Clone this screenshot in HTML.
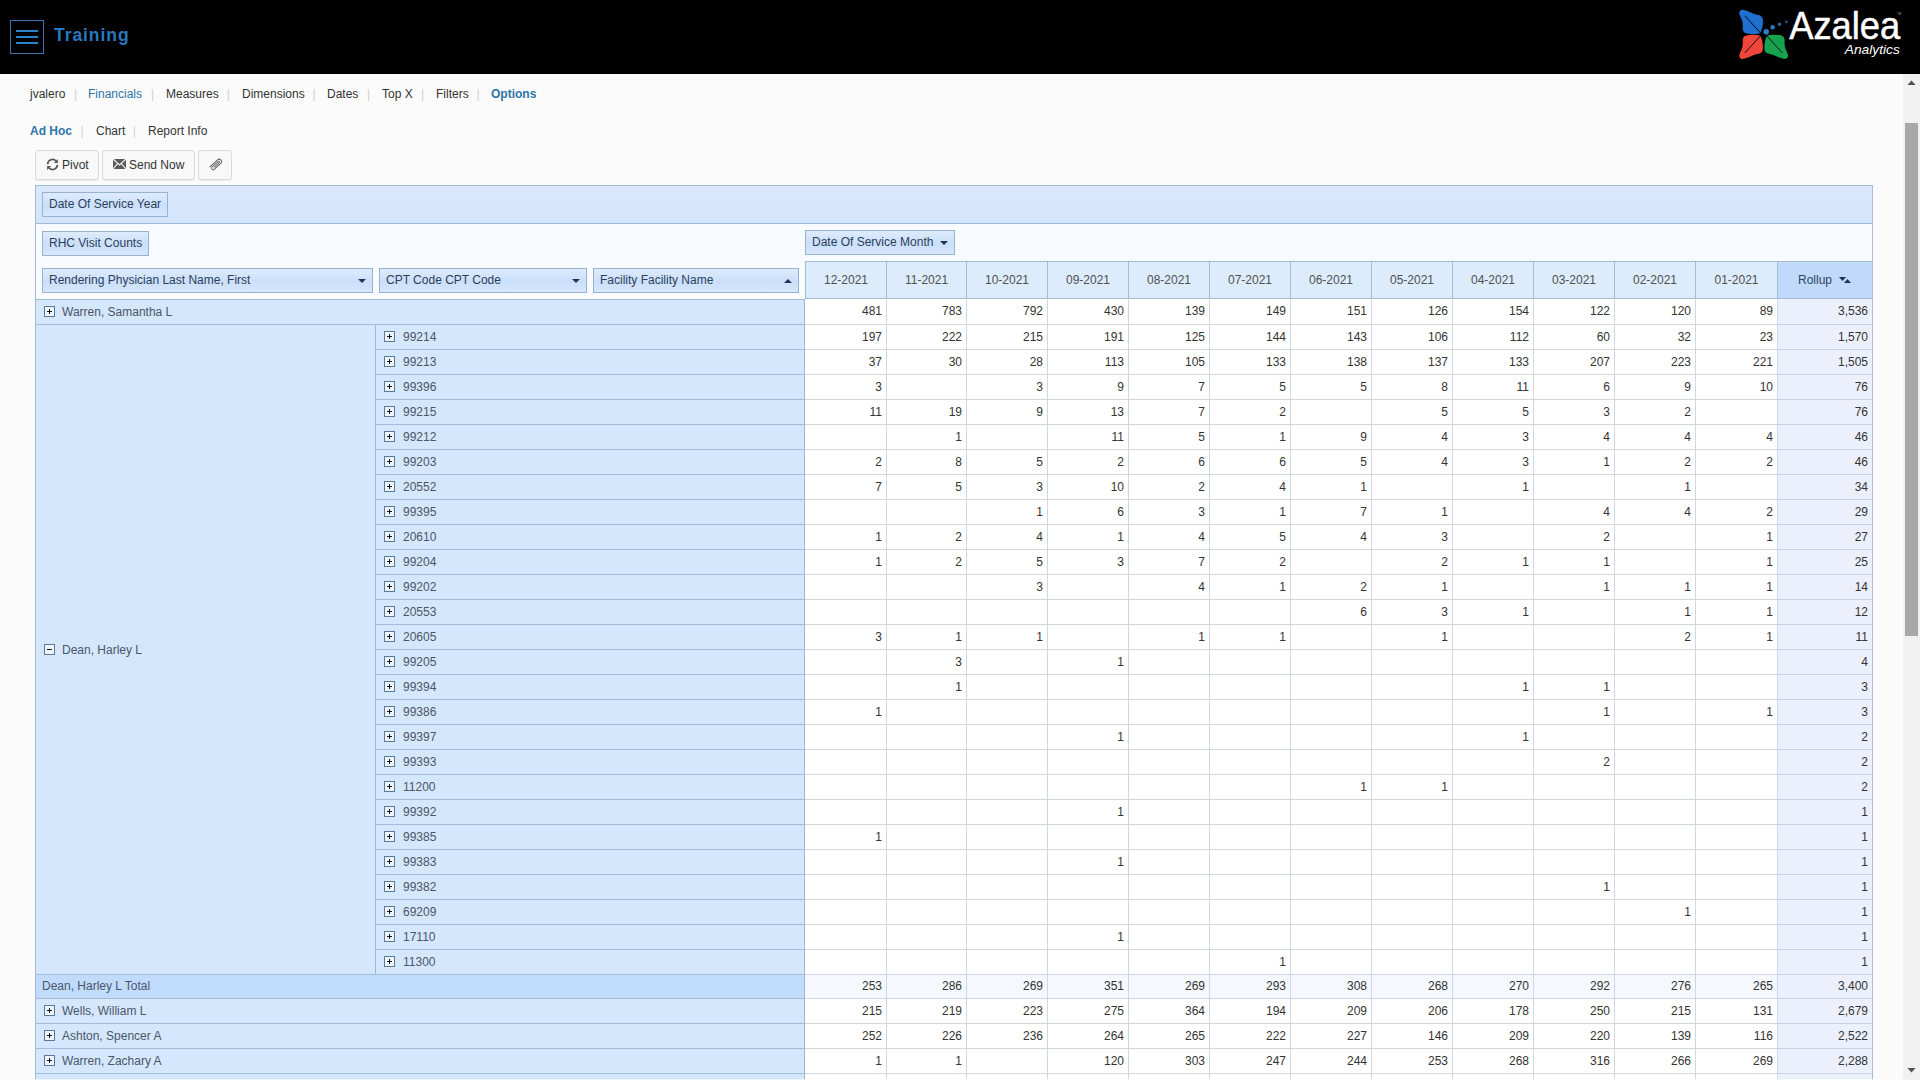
<!DOCTYPE html>
<html><head><meta charset="utf-8"><title>Training</title>
<style>
*{box-sizing:border-box;margin:0;padding:0}
html,body{width:1920px;height:1080px;overflow:hidden;background:#fbfbfb;font-family:"Liberation Sans",sans-serif;font-size:12px;color:#333}
#hdr{position:absolute;left:0;top:0;width:1920px;height:74px;background:#000}
#ham{position:absolute;left:10px;top:20px;width:34px;height:34px;border:1px solid #3a75ad}
#ham i{position:absolute;left:5px;width:22px;height:2px;background:#2a84c6}
#ttl{position:absolute;left:54px;top:23px;font-size:17.5px;font-weight:bold;color:#2878bf;line-height:24px;letter-spacing:.93px}
.nav{position:absolute;left:0;white-space:nowrap;font-size:12px;line-height:14px}
.nav span{position:absolute;top:0}
.nav .sep{color:#d0d0d0}
.lnk{color:#2f74a8}
.btn{position:absolute;top:150px;height:30px;border:1px solid #dcdcdc;border-radius:3px;background:#f8f8f8;box-shadow:0 1px 1px rgba(0,0,0,.07);font-size:12px;line-height:27px;color:#333;white-space:nowrap}
#grid{position:absolute;left:35px;top:185px;width:1838px;height:900px;background:#f7faff;border-left:1px solid #a3b9d6;border-right:1px solid #a8bdd8;border-top:1px solid #a3b9d6;overflow:hidden}
#farea{position:absolute;left:0;top:0;width:1836px;height:38px;background:linear-gradient(#d9e8fc,#d3e5fb);border-bottom:1px solid #9db9d9}
.chip{position:absolute;height:25px;border:1px solid #98b2d2;background:linear-gradient(#deebfd,#cbdffa 55%,#d7e7fc);font-size:12px;line-height:23px;color:#2b3f5c;padding-left:6px;white-space:nowrap}
.chip .ar{position:absolute;right:6px;top:10px;width:0;height:0;border-left:4px solid transparent;border-right:4px solid transparent;border-top:4px solid #1f3554}
.chip .au{position:absolute;right:6px;top:10px;width:0;height:0;border-left:4px solid transparent;border-right:4px solid transparent;border-bottom:4px solid #1f3554}
.pm{position:absolute}
.abs{position:absolute}
.ch{position:absolute;top:75px;height:38px;border-left:1px solid #a6bacf;border-top:1px solid #a6bacf;border-bottom:1px solid #a6bacf;background:#dcecfd;text-align:center;line-height:36px;color:#505050}
.rh{position:absolute;left:0;border-top:1px solid #a4bcd8;border-right:1px solid #a0b4cb;background:#d4e7fc;line-height:24px;white-space:nowrap;color:#4b566a}
.dr{position:absolute;left:769px;width:1068px}
.dc{position:absolute;top:0;height:100%;border-right:1px solid #d0d7e0;border-top:1px solid #d0d6dd;background:#fff;text-align:right;padding-right:4px;line-height:25px;color:#333}
.dc.ru{background:#ecf0fd;border-right:0;border-top-color:#c8d2e5}
.first .dc{border-top-color:#fff;line-height:23px}
.tot .dc{line-height:23px}
.first .dc.ru{border-top-color:#ecf0fd}
.tot .dc{background:#f5f8fe}
.tot .dc.ru{background:#ecf0fd}
#sb{position:absolute;left:1903px;top:74px;width:17px;height:1006px;background:#f1f1f1}
#sbt{position:absolute;left:2px;top:49px;width:13px;height:513px;background:#a8a8a8}
</style></head><body>
<div id="hdr">
<div id="ham"><i style="top:9px"></i><i style="top:15px"></i><i style="top:21px"></i></div>
<div id="ttl">Training</div>

<svg style="position:absolute;left:1730px;top:0" width="190" height="74" viewBox="0 0 1920 748">
<defs><path id="pt" d="M306,336 C265,348 190,348 155,333 C126,320 127,290 129,255 C130,215 112,185 97,150 C85,118 105,95 137,100 C180,106 212,128 247,141 C282,153 322,148 331,192 C339,238 325,292 306,336 Z"/></defs>
<use href="#pt" fill="#1f6fce"/>
<use href="#pt" fill="#ef463b" transform="translate(0,695) scale(1,-1)"/>
<use href="#pt" fill="#17a24f" transform="translate(680,695) scale(-1,-1)"/>
<path d="M150,160 L315,340" stroke="#000" stroke-width="9"/>
<path d="M150,535 L315,355" stroke="#000" stroke-width="9"/>
<path d="M530,535 L365,355" stroke="#000" stroke-width="9"/>
<circle cx="366" cy="322" r="28" fill="#2e7ec6"/><circle cx="431" cy="276" r="23" fill="#2b74b6"/><circle cx="500" cy="246" r="18" fill="#27659e"/><circle cx="570" cy="221" r="15" fill="#23598a"/>
<text x="598" y="396" font-family="Liberation Sans, sans-serif" font-size="392" fill="#fff" stroke="#fff" stroke-width="5" textLength="1122" lengthAdjust="spacingAndGlyphs">Azalea</text>
<text x="1160" y="541" font-family="Liberation Sans, sans-serif" font-style="italic" font-size="121" fill="#fff" textLength="556" lengthAdjust="spacingAndGlyphs">Analytics</text>
<text x="1688" y="152" font-family="Liberation Sans, sans-serif" font-size="28" fill="#aaa">TM</text>
</svg>
</div>
<div class="nav" style="top:87px">
<span class="" style="left:30px">jvalero</span>
<span class="lnk" style="left:88px">Financials</span>
<span class="" style="left:166px">Measures</span>
<span class="" style="left:242px">Dimensions</span>
<span class="" style="left:327px">Dates</span>
<span class="" style="left:382px">Top X</span>
<span class="" style="left:436px">Filters</span>
<span class="lnk" style="left:491px;font-weight:bold">Options</span>
<span class="sep" style="left:74px">|</span>
<span class="sep" style="left:151px">|</span>
<span class="sep" style="left:226.7px">|</span>
<span class="sep" style="left:312.4px">|</span>
<span class="sep" style="left:367px">|</span>
<span class="sep" style="left:421px">|</span>
<span class="sep" style="left:476.4px">|</span>
</div>
<div class="nav" style="top:124px">
<span class="lnk" style="left:30px;font-weight:bold">Ad Hoc</span>
<span class="" style="left:96px">Chart</span>
<span class="" style="left:148px">Report Info</span>
<span class="sep" style="left:80.6px">|</span>
<span class="sep" style="left:132.7px">|</span>
</div>
<div class="btn" style="left:35px;width:64px"><span class="abs" style="left:26px;top:1px">Pivot</span><svg class="abs" style="left:10px;top:7px" width="13" height="13" viewBox="0 0 13 13" fill="none" stroke="#555" stroke-width="1.7"><path d="M1.6,6.2 A4.9,4.9 0 0 1 10.2,3.2"/><path d="M11.4,6.8 A4.9,4.9 0 0 1 2.8,9.8"/><path d="M11.9,0.9 L11.9,5 L7.8,5 Z" fill="#555" stroke="none"/><path d="M1.1,12.1 L1.1,8 L5.2,8 Z" fill="#555" stroke="none"/></svg></div>
<div class="btn" style="left:102px;width:93px"><span class="abs" style="left:26px;top:1px">Send Now</span><svg class="abs" style="left:10px;top:8px" width="13" height="11" viewBox="0 0 13 11"><rect x="0" y="0" width="13" height="10" fill="#5a5a5a"/><path d="M0,0 L6.5,6 L13,0" fill="none" stroke="#f8f8f8" stroke-width="1.2"/><path d="M0,10 L4.6,4.6 M13,10 L8.4,4.6" fill="none" stroke="#f8f8f8" stroke-width="1.1"/></svg></div>
<div class="btn" style="left:198px;width:34px"><svg class="abs" style="left:9px;top:6px" width="16" height="15" viewBox="0 0 16 15" fill="none" stroke="#666" stroke-width="1"><g transform="translate(8,7.5) rotate(-42)"><path d="M-6.5,-2.4 L4.2,-2.4 A2.4,2.4 0 0 1 4.2,2.4 L-4.6,2.4 A1.6,1.6 0 0 1 -4.6,-0.8 L3.4,-0.8 A0.8,0.8 0 0 1 3.4,0.8 L-3.4,0.8"/></g></svg></div>
<div id="grid">
<div id="farea"><div class="chip" style="left:6px;top:6px;width:126px">Date Of Service Year</div></div>
<div class="chip" style="left:6px;top:45px;width:107px">RHC Visit Counts</div>
<div class="chip" style="left:769px;top:44px;width:150px">Date Of Service Month<span class="ar"></span></div>
<div class="chip" style="left:6px;top:82px;width:331px">Rendering Physician Last Name, First<span class="ar"></span></div>
<div class="chip" style="left:343px;top:82px;width:208px">CPT Code CPT Code<span class="ar"></span></div>
<div class="chip" style="left:557px;top:82px;width:206px">Facility Facility Name<span class="au"></span></div>
<div class="ch" style="left:769px;width:81px">12-2021</div>
<div class="ch" style="left:850px;width:80px">11-2021</div>
<div class="ch" style="left:930px;width:81px">10-2021</div>
<div class="ch" style="left:1011px;width:81px">09-2021</div>
<div class="ch" style="left:1092px;width:81px">08-2021</div>
<div class="ch" style="left:1173px;width:81px">07-2021</div>
<div class="ch" style="left:1254px;width:81px">06-2021</div>
<div class="ch" style="left:1335px;width:81px">05-2021</div>
<div class="ch" style="left:1416px;width:81px">04-2021</div>
<div class="ch" style="left:1497px;width:81px">03-2021</div>
<div class="ch" style="left:1578px;width:81px">02-2021</div>
<div class="ch" style="left:1659px;width:82px">01-2021</div>
<div class="ch" style="left:1741px;width:95px;background:#c1dafc;color:#2d4466"><span class="abs" style="left:20px;top:0">Rollup</span><svg class="abs" style="left:61px;top:15px" width="13" height="7" viewBox="0 0 13 7"><path d="M0,0 L7,0 L3.5,4 Z M5,6 L12,6 L8.5,2 Z" fill="#1b305c"/></svg></div>
<div class="rh" style="top:113px;width:769px;height:25px"><svg class="pm" style="left:8px;top:6px" width="11" height="11" viewBox="0 0 11 11"><rect x="0.5" y="0.5" width="10" height="10" fill="#eef5fe" stroke="#5b7896"/><rect x="3" y="5" width="5" height="1" fill="#111"/><rect x="5" y="3" width="1" height="5" fill="#111"/></svg><span class="abs" style="left:26px">Warren, Samantha L</span></div>
<div class="dr first" style="top:113px;height:25px"><div class="dc" style="left:0px;width:82px">481</div><div class="dc" style="left:82px;width:80px">783</div><div class="dc" style="left:162px;width:81px">792</div><div class="dc" style="left:243px;width:81px">430</div><div class="dc" style="left:324px;width:81px">139</div><div class="dc" style="left:405px;width:81px">149</div><div class="dc" style="left:486px;width:81px">151</div><div class="dc" style="left:567px;width:81px">126</div><div class="dc" style="left:648px;width:81px">154</div><div class="dc" style="left:729px;width:81px">122</div><div class="dc" style="left:810px;width:81px">120</div><div class="dc" style="left:891px;width:82px">89</div><div class="dc ru" style="left:973px;width:94px">3,536</div></div>
<div class="rh" style="top:138px;width:340px;height:650px;line-height:650px"><svg class="pm" style="left:8px;top:319px" width="11" height="11" viewBox="0 0 11 11"><rect x="0.5" y="0.5" width="10" height="10" fill="#eef5fe" stroke="#5b7896"/><rect x="3" y="5" width="5" height="1" fill="#111"/></svg><span class="abs" style="left:26px;top:0">Dean, Harley L</span></div>
<div class="rh" style="top:138px;left:339px;width:430px;height:25px;border-left:1px solid #9db9d9"><svg class="pm" style="left:8px;top:6px" width="11" height="11" viewBox="0 0 11 11"><rect x="0.5" y="0.5" width="10" height="10" fill="#eef5fe" stroke="#5b7896"/><rect x="3" y="5" width="5" height="1" fill="#111"/><rect x="5" y="3" width="1" height="5" fill="#111"/></svg><span class="abs" style="left:27px">99214</span></div>
<div class="dr " style="top:138px;height:25px"><div class="dc" style="left:0px;width:82px">197</div><div class="dc" style="left:82px;width:80px">222</div><div class="dc" style="left:162px;width:81px">215</div><div class="dc" style="left:243px;width:81px">191</div><div class="dc" style="left:324px;width:81px">125</div><div class="dc" style="left:405px;width:81px">144</div><div class="dc" style="left:486px;width:81px">143</div><div class="dc" style="left:567px;width:81px">106</div><div class="dc" style="left:648px;width:81px">112</div><div class="dc" style="left:729px;width:81px">60</div><div class="dc" style="left:810px;width:81px">32</div><div class="dc" style="left:891px;width:82px">23</div><div class="dc ru" style="left:973px;width:94px">1,570</div></div>
<div class="rh" style="top:163px;left:339px;width:430px;height:25px;border-left:1px solid #9db9d9"><svg class="pm" style="left:8px;top:6px" width="11" height="11" viewBox="0 0 11 11"><rect x="0.5" y="0.5" width="10" height="10" fill="#eef5fe" stroke="#5b7896"/><rect x="3" y="5" width="5" height="1" fill="#111"/><rect x="5" y="3" width="1" height="5" fill="#111"/></svg><span class="abs" style="left:27px">99213</span></div>
<div class="dr " style="top:163px;height:25px"><div class="dc" style="left:0px;width:82px">37</div><div class="dc" style="left:82px;width:80px">30</div><div class="dc" style="left:162px;width:81px">28</div><div class="dc" style="left:243px;width:81px">113</div><div class="dc" style="left:324px;width:81px">105</div><div class="dc" style="left:405px;width:81px">133</div><div class="dc" style="left:486px;width:81px">138</div><div class="dc" style="left:567px;width:81px">137</div><div class="dc" style="left:648px;width:81px">133</div><div class="dc" style="left:729px;width:81px">207</div><div class="dc" style="left:810px;width:81px">223</div><div class="dc" style="left:891px;width:82px">221</div><div class="dc ru" style="left:973px;width:94px">1,505</div></div>
<div class="rh" style="top:188px;left:339px;width:430px;height:25px;border-left:1px solid #9db9d9"><svg class="pm" style="left:8px;top:6px" width="11" height="11" viewBox="0 0 11 11"><rect x="0.5" y="0.5" width="10" height="10" fill="#eef5fe" stroke="#5b7896"/><rect x="3" y="5" width="5" height="1" fill="#111"/><rect x="5" y="3" width="1" height="5" fill="#111"/></svg><span class="abs" style="left:27px">99396</span></div>
<div class="dr " style="top:188px;height:25px"><div class="dc" style="left:0px;width:82px">3</div><div class="dc" style="left:82px;width:80px"></div><div class="dc" style="left:162px;width:81px">3</div><div class="dc" style="left:243px;width:81px">9</div><div class="dc" style="left:324px;width:81px">7</div><div class="dc" style="left:405px;width:81px">5</div><div class="dc" style="left:486px;width:81px">5</div><div class="dc" style="left:567px;width:81px">8</div><div class="dc" style="left:648px;width:81px">11</div><div class="dc" style="left:729px;width:81px">6</div><div class="dc" style="left:810px;width:81px">9</div><div class="dc" style="left:891px;width:82px">10</div><div class="dc ru" style="left:973px;width:94px">76</div></div>
<div class="rh" style="top:213px;left:339px;width:430px;height:25px;border-left:1px solid #9db9d9"><svg class="pm" style="left:8px;top:6px" width="11" height="11" viewBox="0 0 11 11"><rect x="0.5" y="0.5" width="10" height="10" fill="#eef5fe" stroke="#5b7896"/><rect x="3" y="5" width="5" height="1" fill="#111"/><rect x="5" y="3" width="1" height="5" fill="#111"/></svg><span class="abs" style="left:27px">99215</span></div>
<div class="dr " style="top:213px;height:25px"><div class="dc" style="left:0px;width:82px">11</div><div class="dc" style="left:82px;width:80px">19</div><div class="dc" style="left:162px;width:81px">9</div><div class="dc" style="left:243px;width:81px">13</div><div class="dc" style="left:324px;width:81px">7</div><div class="dc" style="left:405px;width:81px">2</div><div class="dc" style="left:486px;width:81px"></div><div class="dc" style="left:567px;width:81px">5</div><div class="dc" style="left:648px;width:81px">5</div><div class="dc" style="left:729px;width:81px">3</div><div class="dc" style="left:810px;width:81px">2</div><div class="dc" style="left:891px;width:82px"></div><div class="dc ru" style="left:973px;width:94px">76</div></div>
<div class="rh" style="top:238px;left:339px;width:430px;height:25px;border-left:1px solid #9db9d9"><svg class="pm" style="left:8px;top:6px" width="11" height="11" viewBox="0 0 11 11"><rect x="0.5" y="0.5" width="10" height="10" fill="#eef5fe" stroke="#5b7896"/><rect x="3" y="5" width="5" height="1" fill="#111"/><rect x="5" y="3" width="1" height="5" fill="#111"/></svg><span class="abs" style="left:27px">99212</span></div>
<div class="dr " style="top:238px;height:25px"><div class="dc" style="left:0px;width:82px"></div><div class="dc" style="left:82px;width:80px">1</div><div class="dc" style="left:162px;width:81px"></div><div class="dc" style="left:243px;width:81px">11</div><div class="dc" style="left:324px;width:81px">5</div><div class="dc" style="left:405px;width:81px">1</div><div class="dc" style="left:486px;width:81px">9</div><div class="dc" style="left:567px;width:81px">4</div><div class="dc" style="left:648px;width:81px">3</div><div class="dc" style="left:729px;width:81px">4</div><div class="dc" style="left:810px;width:81px">4</div><div class="dc" style="left:891px;width:82px">4</div><div class="dc ru" style="left:973px;width:94px">46</div></div>
<div class="rh" style="top:263px;left:339px;width:430px;height:25px;border-left:1px solid #9db9d9"><svg class="pm" style="left:8px;top:6px" width="11" height="11" viewBox="0 0 11 11"><rect x="0.5" y="0.5" width="10" height="10" fill="#eef5fe" stroke="#5b7896"/><rect x="3" y="5" width="5" height="1" fill="#111"/><rect x="5" y="3" width="1" height="5" fill="#111"/></svg><span class="abs" style="left:27px">99203</span></div>
<div class="dr " style="top:263px;height:25px"><div class="dc" style="left:0px;width:82px">2</div><div class="dc" style="left:82px;width:80px">8</div><div class="dc" style="left:162px;width:81px">5</div><div class="dc" style="left:243px;width:81px">2</div><div class="dc" style="left:324px;width:81px">6</div><div class="dc" style="left:405px;width:81px">6</div><div class="dc" style="left:486px;width:81px">5</div><div class="dc" style="left:567px;width:81px">4</div><div class="dc" style="left:648px;width:81px">3</div><div class="dc" style="left:729px;width:81px">1</div><div class="dc" style="left:810px;width:81px">2</div><div class="dc" style="left:891px;width:82px">2</div><div class="dc ru" style="left:973px;width:94px">46</div></div>
<div class="rh" style="top:288px;left:339px;width:430px;height:25px;border-left:1px solid #9db9d9"><svg class="pm" style="left:8px;top:6px" width="11" height="11" viewBox="0 0 11 11"><rect x="0.5" y="0.5" width="10" height="10" fill="#eef5fe" stroke="#5b7896"/><rect x="3" y="5" width="5" height="1" fill="#111"/><rect x="5" y="3" width="1" height="5" fill="#111"/></svg><span class="abs" style="left:27px">20552</span></div>
<div class="dr " style="top:288px;height:25px"><div class="dc" style="left:0px;width:82px">7</div><div class="dc" style="left:82px;width:80px">5</div><div class="dc" style="left:162px;width:81px">3</div><div class="dc" style="left:243px;width:81px">10</div><div class="dc" style="left:324px;width:81px">2</div><div class="dc" style="left:405px;width:81px">4</div><div class="dc" style="left:486px;width:81px">1</div><div class="dc" style="left:567px;width:81px"></div><div class="dc" style="left:648px;width:81px">1</div><div class="dc" style="left:729px;width:81px"></div><div class="dc" style="left:810px;width:81px">1</div><div class="dc" style="left:891px;width:82px"></div><div class="dc ru" style="left:973px;width:94px">34</div></div>
<div class="rh" style="top:313px;left:339px;width:430px;height:25px;border-left:1px solid #9db9d9"><svg class="pm" style="left:8px;top:6px" width="11" height="11" viewBox="0 0 11 11"><rect x="0.5" y="0.5" width="10" height="10" fill="#eef5fe" stroke="#5b7896"/><rect x="3" y="5" width="5" height="1" fill="#111"/><rect x="5" y="3" width="1" height="5" fill="#111"/></svg><span class="abs" style="left:27px">99395</span></div>
<div class="dr " style="top:313px;height:25px"><div class="dc" style="left:0px;width:82px"></div><div class="dc" style="left:82px;width:80px"></div><div class="dc" style="left:162px;width:81px">1</div><div class="dc" style="left:243px;width:81px">6</div><div class="dc" style="left:324px;width:81px">3</div><div class="dc" style="left:405px;width:81px">1</div><div class="dc" style="left:486px;width:81px">7</div><div class="dc" style="left:567px;width:81px">1</div><div class="dc" style="left:648px;width:81px"></div><div class="dc" style="left:729px;width:81px">4</div><div class="dc" style="left:810px;width:81px">4</div><div class="dc" style="left:891px;width:82px">2</div><div class="dc ru" style="left:973px;width:94px">29</div></div>
<div class="rh" style="top:338px;left:339px;width:430px;height:25px;border-left:1px solid #9db9d9"><svg class="pm" style="left:8px;top:6px" width="11" height="11" viewBox="0 0 11 11"><rect x="0.5" y="0.5" width="10" height="10" fill="#eef5fe" stroke="#5b7896"/><rect x="3" y="5" width="5" height="1" fill="#111"/><rect x="5" y="3" width="1" height="5" fill="#111"/></svg><span class="abs" style="left:27px">20610</span></div>
<div class="dr " style="top:338px;height:25px"><div class="dc" style="left:0px;width:82px">1</div><div class="dc" style="left:82px;width:80px">2</div><div class="dc" style="left:162px;width:81px">4</div><div class="dc" style="left:243px;width:81px">1</div><div class="dc" style="left:324px;width:81px">4</div><div class="dc" style="left:405px;width:81px">5</div><div class="dc" style="left:486px;width:81px">4</div><div class="dc" style="left:567px;width:81px">3</div><div class="dc" style="left:648px;width:81px"></div><div class="dc" style="left:729px;width:81px">2</div><div class="dc" style="left:810px;width:81px"></div><div class="dc" style="left:891px;width:82px">1</div><div class="dc ru" style="left:973px;width:94px">27</div></div>
<div class="rh" style="top:363px;left:339px;width:430px;height:25px;border-left:1px solid #9db9d9"><svg class="pm" style="left:8px;top:6px" width="11" height="11" viewBox="0 0 11 11"><rect x="0.5" y="0.5" width="10" height="10" fill="#eef5fe" stroke="#5b7896"/><rect x="3" y="5" width="5" height="1" fill="#111"/><rect x="5" y="3" width="1" height="5" fill="#111"/></svg><span class="abs" style="left:27px">99204</span></div>
<div class="dr " style="top:363px;height:25px"><div class="dc" style="left:0px;width:82px">1</div><div class="dc" style="left:82px;width:80px">2</div><div class="dc" style="left:162px;width:81px">5</div><div class="dc" style="left:243px;width:81px">3</div><div class="dc" style="left:324px;width:81px">7</div><div class="dc" style="left:405px;width:81px">2</div><div class="dc" style="left:486px;width:81px"></div><div class="dc" style="left:567px;width:81px">2</div><div class="dc" style="left:648px;width:81px">1</div><div class="dc" style="left:729px;width:81px">1</div><div class="dc" style="left:810px;width:81px"></div><div class="dc" style="left:891px;width:82px">1</div><div class="dc ru" style="left:973px;width:94px">25</div></div>
<div class="rh" style="top:388px;left:339px;width:430px;height:25px;border-left:1px solid #9db9d9"><svg class="pm" style="left:8px;top:6px" width="11" height="11" viewBox="0 0 11 11"><rect x="0.5" y="0.5" width="10" height="10" fill="#eef5fe" stroke="#5b7896"/><rect x="3" y="5" width="5" height="1" fill="#111"/><rect x="5" y="3" width="1" height="5" fill="#111"/></svg><span class="abs" style="left:27px">99202</span></div>
<div class="dr " style="top:388px;height:25px"><div class="dc" style="left:0px;width:82px"></div><div class="dc" style="left:82px;width:80px"></div><div class="dc" style="left:162px;width:81px">3</div><div class="dc" style="left:243px;width:81px"></div><div class="dc" style="left:324px;width:81px">4</div><div class="dc" style="left:405px;width:81px">1</div><div class="dc" style="left:486px;width:81px">2</div><div class="dc" style="left:567px;width:81px">1</div><div class="dc" style="left:648px;width:81px"></div><div class="dc" style="left:729px;width:81px">1</div><div class="dc" style="left:810px;width:81px">1</div><div class="dc" style="left:891px;width:82px">1</div><div class="dc ru" style="left:973px;width:94px">14</div></div>
<div class="rh" style="top:413px;left:339px;width:430px;height:25px;border-left:1px solid #9db9d9"><svg class="pm" style="left:8px;top:6px" width="11" height="11" viewBox="0 0 11 11"><rect x="0.5" y="0.5" width="10" height="10" fill="#eef5fe" stroke="#5b7896"/><rect x="3" y="5" width="5" height="1" fill="#111"/><rect x="5" y="3" width="1" height="5" fill="#111"/></svg><span class="abs" style="left:27px">20553</span></div>
<div class="dr " style="top:413px;height:25px"><div class="dc" style="left:0px;width:82px"></div><div class="dc" style="left:82px;width:80px"></div><div class="dc" style="left:162px;width:81px"></div><div class="dc" style="left:243px;width:81px"></div><div class="dc" style="left:324px;width:81px"></div><div class="dc" style="left:405px;width:81px"></div><div class="dc" style="left:486px;width:81px">6</div><div class="dc" style="left:567px;width:81px">3</div><div class="dc" style="left:648px;width:81px">1</div><div class="dc" style="left:729px;width:81px"></div><div class="dc" style="left:810px;width:81px">1</div><div class="dc" style="left:891px;width:82px">1</div><div class="dc ru" style="left:973px;width:94px">12</div></div>
<div class="rh" style="top:438px;left:339px;width:430px;height:25px;border-left:1px solid #9db9d9"><svg class="pm" style="left:8px;top:6px" width="11" height="11" viewBox="0 0 11 11"><rect x="0.5" y="0.5" width="10" height="10" fill="#eef5fe" stroke="#5b7896"/><rect x="3" y="5" width="5" height="1" fill="#111"/><rect x="5" y="3" width="1" height="5" fill="#111"/></svg><span class="abs" style="left:27px">20605</span></div>
<div class="dr " style="top:438px;height:25px"><div class="dc" style="left:0px;width:82px">3</div><div class="dc" style="left:82px;width:80px">1</div><div class="dc" style="left:162px;width:81px">1</div><div class="dc" style="left:243px;width:81px"></div><div class="dc" style="left:324px;width:81px">1</div><div class="dc" style="left:405px;width:81px">1</div><div class="dc" style="left:486px;width:81px"></div><div class="dc" style="left:567px;width:81px">1</div><div class="dc" style="left:648px;width:81px"></div><div class="dc" style="left:729px;width:81px"></div><div class="dc" style="left:810px;width:81px">2</div><div class="dc" style="left:891px;width:82px">1</div><div class="dc ru" style="left:973px;width:94px">11</div></div>
<div class="rh" style="top:463px;left:339px;width:430px;height:25px;border-left:1px solid #9db9d9"><svg class="pm" style="left:8px;top:6px" width="11" height="11" viewBox="0 0 11 11"><rect x="0.5" y="0.5" width="10" height="10" fill="#eef5fe" stroke="#5b7896"/><rect x="3" y="5" width="5" height="1" fill="#111"/><rect x="5" y="3" width="1" height="5" fill="#111"/></svg><span class="abs" style="left:27px">99205</span></div>
<div class="dr " style="top:463px;height:25px"><div class="dc" style="left:0px;width:82px"></div><div class="dc" style="left:82px;width:80px">3</div><div class="dc" style="left:162px;width:81px"></div><div class="dc" style="left:243px;width:81px">1</div><div class="dc" style="left:324px;width:81px"></div><div class="dc" style="left:405px;width:81px"></div><div class="dc" style="left:486px;width:81px"></div><div class="dc" style="left:567px;width:81px"></div><div class="dc" style="left:648px;width:81px"></div><div class="dc" style="left:729px;width:81px"></div><div class="dc" style="left:810px;width:81px"></div><div class="dc" style="left:891px;width:82px"></div><div class="dc ru" style="left:973px;width:94px">4</div></div>
<div class="rh" style="top:488px;left:339px;width:430px;height:25px;border-left:1px solid #9db9d9"><svg class="pm" style="left:8px;top:6px" width="11" height="11" viewBox="0 0 11 11"><rect x="0.5" y="0.5" width="10" height="10" fill="#eef5fe" stroke="#5b7896"/><rect x="3" y="5" width="5" height="1" fill="#111"/><rect x="5" y="3" width="1" height="5" fill="#111"/></svg><span class="abs" style="left:27px">99394</span></div>
<div class="dr " style="top:488px;height:25px"><div class="dc" style="left:0px;width:82px"></div><div class="dc" style="left:82px;width:80px">1</div><div class="dc" style="left:162px;width:81px"></div><div class="dc" style="left:243px;width:81px"></div><div class="dc" style="left:324px;width:81px"></div><div class="dc" style="left:405px;width:81px"></div><div class="dc" style="left:486px;width:81px"></div><div class="dc" style="left:567px;width:81px"></div><div class="dc" style="left:648px;width:81px">1</div><div class="dc" style="left:729px;width:81px">1</div><div class="dc" style="left:810px;width:81px"></div><div class="dc" style="left:891px;width:82px"></div><div class="dc ru" style="left:973px;width:94px">3</div></div>
<div class="rh" style="top:513px;left:339px;width:430px;height:25px;border-left:1px solid #9db9d9"><svg class="pm" style="left:8px;top:6px" width="11" height="11" viewBox="0 0 11 11"><rect x="0.5" y="0.5" width="10" height="10" fill="#eef5fe" stroke="#5b7896"/><rect x="3" y="5" width="5" height="1" fill="#111"/><rect x="5" y="3" width="1" height="5" fill="#111"/></svg><span class="abs" style="left:27px">99386</span></div>
<div class="dr " style="top:513px;height:25px"><div class="dc" style="left:0px;width:82px">1</div><div class="dc" style="left:82px;width:80px"></div><div class="dc" style="left:162px;width:81px"></div><div class="dc" style="left:243px;width:81px"></div><div class="dc" style="left:324px;width:81px"></div><div class="dc" style="left:405px;width:81px"></div><div class="dc" style="left:486px;width:81px"></div><div class="dc" style="left:567px;width:81px"></div><div class="dc" style="left:648px;width:81px"></div><div class="dc" style="left:729px;width:81px">1</div><div class="dc" style="left:810px;width:81px"></div><div class="dc" style="left:891px;width:82px">1</div><div class="dc ru" style="left:973px;width:94px">3</div></div>
<div class="rh" style="top:538px;left:339px;width:430px;height:25px;border-left:1px solid #9db9d9"><svg class="pm" style="left:8px;top:6px" width="11" height="11" viewBox="0 0 11 11"><rect x="0.5" y="0.5" width="10" height="10" fill="#eef5fe" stroke="#5b7896"/><rect x="3" y="5" width="5" height="1" fill="#111"/><rect x="5" y="3" width="1" height="5" fill="#111"/></svg><span class="abs" style="left:27px">99397</span></div>
<div class="dr " style="top:538px;height:25px"><div class="dc" style="left:0px;width:82px"></div><div class="dc" style="left:82px;width:80px"></div><div class="dc" style="left:162px;width:81px"></div><div class="dc" style="left:243px;width:81px">1</div><div class="dc" style="left:324px;width:81px"></div><div class="dc" style="left:405px;width:81px"></div><div class="dc" style="left:486px;width:81px"></div><div class="dc" style="left:567px;width:81px"></div><div class="dc" style="left:648px;width:81px">1</div><div class="dc" style="left:729px;width:81px"></div><div class="dc" style="left:810px;width:81px"></div><div class="dc" style="left:891px;width:82px"></div><div class="dc ru" style="left:973px;width:94px">2</div></div>
<div class="rh" style="top:563px;left:339px;width:430px;height:25px;border-left:1px solid #9db9d9"><svg class="pm" style="left:8px;top:6px" width="11" height="11" viewBox="0 0 11 11"><rect x="0.5" y="0.5" width="10" height="10" fill="#eef5fe" stroke="#5b7896"/><rect x="3" y="5" width="5" height="1" fill="#111"/><rect x="5" y="3" width="1" height="5" fill="#111"/></svg><span class="abs" style="left:27px">99393</span></div>
<div class="dr " style="top:563px;height:25px"><div class="dc" style="left:0px;width:82px"></div><div class="dc" style="left:82px;width:80px"></div><div class="dc" style="left:162px;width:81px"></div><div class="dc" style="left:243px;width:81px"></div><div class="dc" style="left:324px;width:81px"></div><div class="dc" style="left:405px;width:81px"></div><div class="dc" style="left:486px;width:81px"></div><div class="dc" style="left:567px;width:81px"></div><div class="dc" style="left:648px;width:81px"></div><div class="dc" style="left:729px;width:81px">2</div><div class="dc" style="left:810px;width:81px"></div><div class="dc" style="left:891px;width:82px"></div><div class="dc ru" style="left:973px;width:94px">2</div></div>
<div class="rh" style="top:588px;left:339px;width:430px;height:25px;border-left:1px solid #9db9d9"><svg class="pm" style="left:8px;top:6px" width="11" height="11" viewBox="0 0 11 11"><rect x="0.5" y="0.5" width="10" height="10" fill="#eef5fe" stroke="#5b7896"/><rect x="3" y="5" width="5" height="1" fill="#111"/><rect x="5" y="3" width="1" height="5" fill="#111"/></svg><span class="abs" style="left:27px">11200</span></div>
<div class="dr " style="top:588px;height:25px"><div class="dc" style="left:0px;width:82px"></div><div class="dc" style="left:82px;width:80px"></div><div class="dc" style="left:162px;width:81px"></div><div class="dc" style="left:243px;width:81px"></div><div class="dc" style="left:324px;width:81px"></div><div class="dc" style="left:405px;width:81px"></div><div class="dc" style="left:486px;width:81px">1</div><div class="dc" style="left:567px;width:81px">1</div><div class="dc" style="left:648px;width:81px"></div><div class="dc" style="left:729px;width:81px"></div><div class="dc" style="left:810px;width:81px"></div><div class="dc" style="left:891px;width:82px"></div><div class="dc ru" style="left:973px;width:94px">2</div></div>
<div class="rh" style="top:613px;left:339px;width:430px;height:25px;border-left:1px solid #9db9d9"><svg class="pm" style="left:8px;top:6px" width="11" height="11" viewBox="0 0 11 11"><rect x="0.5" y="0.5" width="10" height="10" fill="#eef5fe" stroke="#5b7896"/><rect x="3" y="5" width="5" height="1" fill="#111"/><rect x="5" y="3" width="1" height="5" fill="#111"/></svg><span class="abs" style="left:27px">99392</span></div>
<div class="dr " style="top:613px;height:25px"><div class="dc" style="left:0px;width:82px"></div><div class="dc" style="left:82px;width:80px"></div><div class="dc" style="left:162px;width:81px"></div><div class="dc" style="left:243px;width:81px">1</div><div class="dc" style="left:324px;width:81px"></div><div class="dc" style="left:405px;width:81px"></div><div class="dc" style="left:486px;width:81px"></div><div class="dc" style="left:567px;width:81px"></div><div class="dc" style="left:648px;width:81px"></div><div class="dc" style="left:729px;width:81px"></div><div class="dc" style="left:810px;width:81px"></div><div class="dc" style="left:891px;width:82px"></div><div class="dc ru" style="left:973px;width:94px">1</div></div>
<div class="rh" style="top:638px;left:339px;width:430px;height:25px;border-left:1px solid #9db9d9"><svg class="pm" style="left:8px;top:6px" width="11" height="11" viewBox="0 0 11 11"><rect x="0.5" y="0.5" width="10" height="10" fill="#eef5fe" stroke="#5b7896"/><rect x="3" y="5" width="5" height="1" fill="#111"/><rect x="5" y="3" width="1" height="5" fill="#111"/></svg><span class="abs" style="left:27px">99385</span></div>
<div class="dr " style="top:638px;height:25px"><div class="dc" style="left:0px;width:82px">1</div><div class="dc" style="left:82px;width:80px"></div><div class="dc" style="left:162px;width:81px"></div><div class="dc" style="left:243px;width:81px"></div><div class="dc" style="left:324px;width:81px"></div><div class="dc" style="left:405px;width:81px"></div><div class="dc" style="left:486px;width:81px"></div><div class="dc" style="left:567px;width:81px"></div><div class="dc" style="left:648px;width:81px"></div><div class="dc" style="left:729px;width:81px"></div><div class="dc" style="left:810px;width:81px"></div><div class="dc" style="left:891px;width:82px"></div><div class="dc ru" style="left:973px;width:94px">1</div></div>
<div class="rh" style="top:663px;left:339px;width:430px;height:25px;border-left:1px solid #9db9d9"><svg class="pm" style="left:8px;top:6px" width="11" height="11" viewBox="0 0 11 11"><rect x="0.5" y="0.5" width="10" height="10" fill="#eef5fe" stroke="#5b7896"/><rect x="3" y="5" width="5" height="1" fill="#111"/><rect x="5" y="3" width="1" height="5" fill="#111"/></svg><span class="abs" style="left:27px">99383</span></div>
<div class="dr " style="top:663px;height:25px"><div class="dc" style="left:0px;width:82px"></div><div class="dc" style="left:82px;width:80px"></div><div class="dc" style="left:162px;width:81px"></div><div class="dc" style="left:243px;width:81px">1</div><div class="dc" style="left:324px;width:81px"></div><div class="dc" style="left:405px;width:81px"></div><div class="dc" style="left:486px;width:81px"></div><div class="dc" style="left:567px;width:81px"></div><div class="dc" style="left:648px;width:81px"></div><div class="dc" style="left:729px;width:81px"></div><div class="dc" style="left:810px;width:81px"></div><div class="dc" style="left:891px;width:82px"></div><div class="dc ru" style="left:973px;width:94px">1</div></div>
<div class="rh" style="top:688px;left:339px;width:430px;height:25px;border-left:1px solid #9db9d9"><svg class="pm" style="left:8px;top:6px" width="11" height="11" viewBox="0 0 11 11"><rect x="0.5" y="0.5" width="10" height="10" fill="#eef5fe" stroke="#5b7896"/><rect x="3" y="5" width="5" height="1" fill="#111"/><rect x="5" y="3" width="1" height="5" fill="#111"/></svg><span class="abs" style="left:27px">99382</span></div>
<div class="dr " style="top:688px;height:25px"><div class="dc" style="left:0px;width:82px"></div><div class="dc" style="left:82px;width:80px"></div><div class="dc" style="left:162px;width:81px"></div><div class="dc" style="left:243px;width:81px"></div><div class="dc" style="left:324px;width:81px"></div><div class="dc" style="left:405px;width:81px"></div><div class="dc" style="left:486px;width:81px"></div><div class="dc" style="left:567px;width:81px"></div><div class="dc" style="left:648px;width:81px"></div><div class="dc" style="left:729px;width:81px">1</div><div class="dc" style="left:810px;width:81px"></div><div class="dc" style="left:891px;width:82px"></div><div class="dc ru" style="left:973px;width:94px">1</div></div>
<div class="rh" style="top:713px;left:339px;width:430px;height:25px;border-left:1px solid #9db9d9"><svg class="pm" style="left:8px;top:6px" width="11" height="11" viewBox="0 0 11 11"><rect x="0.5" y="0.5" width="10" height="10" fill="#eef5fe" stroke="#5b7896"/><rect x="3" y="5" width="5" height="1" fill="#111"/><rect x="5" y="3" width="1" height="5" fill="#111"/></svg><span class="abs" style="left:27px">69209</span></div>
<div class="dr " style="top:713px;height:25px"><div class="dc" style="left:0px;width:82px"></div><div class="dc" style="left:82px;width:80px"></div><div class="dc" style="left:162px;width:81px"></div><div class="dc" style="left:243px;width:81px"></div><div class="dc" style="left:324px;width:81px"></div><div class="dc" style="left:405px;width:81px"></div><div class="dc" style="left:486px;width:81px"></div><div class="dc" style="left:567px;width:81px"></div><div class="dc" style="left:648px;width:81px"></div><div class="dc" style="left:729px;width:81px"></div><div class="dc" style="left:810px;width:81px">1</div><div class="dc" style="left:891px;width:82px"></div><div class="dc ru" style="left:973px;width:94px">1</div></div>
<div class="rh" style="top:738px;left:339px;width:430px;height:25px;border-left:1px solid #9db9d9"><svg class="pm" style="left:8px;top:6px" width="11" height="11" viewBox="0 0 11 11"><rect x="0.5" y="0.5" width="10" height="10" fill="#eef5fe" stroke="#5b7896"/><rect x="3" y="5" width="5" height="1" fill="#111"/><rect x="5" y="3" width="1" height="5" fill="#111"/></svg><span class="abs" style="left:27px">17110</span></div>
<div class="dr " style="top:738px;height:25px"><div class="dc" style="left:0px;width:82px"></div><div class="dc" style="left:82px;width:80px"></div><div class="dc" style="left:162px;width:81px"></div><div class="dc" style="left:243px;width:81px">1</div><div class="dc" style="left:324px;width:81px"></div><div class="dc" style="left:405px;width:81px"></div><div class="dc" style="left:486px;width:81px"></div><div class="dc" style="left:567px;width:81px"></div><div class="dc" style="left:648px;width:81px"></div><div class="dc" style="left:729px;width:81px"></div><div class="dc" style="left:810px;width:81px"></div><div class="dc" style="left:891px;width:82px"></div><div class="dc ru" style="left:973px;width:94px">1</div></div>
<div class="rh" style="top:763px;left:339px;width:430px;height:25px;border-left:1px solid #9db9d9"><svg class="pm" style="left:8px;top:6px" width="11" height="11" viewBox="0 0 11 11"><rect x="0.5" y="0.5" width="10" height="10" fill="#eef5fe" stroke="#5b7896"/><rect x="3" y="5" width="5" height="1" fill="#111"/><rect x="5" y="3" width="1" height="5" fill="#111"/></svg><span class="abs" style="left:27px">11300</span></div>
<div class="dr " style="top:763px;height:25px"><div class="dc" style="left:0px;width:82px"></div><div class="dc" style="left:82px;width:80px"></div><div class="dc" style="left:162px;width:81px"></div><div class="dc" style="left:243px;width:81px"></div><div class="dc" style="left:324px;width:81px"></div><div class="dc" style="left:405px;width:81px">1</div><div class="dc" style="left:486px;width:81px"></div><div class="dc" style="left:567px;width:81px"></div><div class="dc" style="left:648px;width:81px"></div><div class="dc" style="left:729px;width:81px"></div><div class="dc" style="left:810px;width:81px"></div><div class="dc" style="left:891px;width:82px"></div><div class="dc ru" style="left:973px;width:94px">1</div></div>
<div class="rh" style="top:788px;width:769px;height:24px;background:#c1dbfc;line-height:23px"><span class="abs" style="left:6px">Dean, Harley L Total</span></div>
<div class="dr tot" style="top:788px;height:24px"><div class="dc" style="left:0px;width:82px">253</div><div class="dc" style="left:82px;width:80px">286</div><div class="dc" style="left:162px;width:81px">269</div><div class="dc" style="left:243px;width:81px">351</div><div class="dc" style="left:324px;width:81px">269</div><div class="dc" style="left:405px;width:81px">293</div><div class="dc" style="left:486px;width:81px">308</div><div class="dc" style="left:567px;width:81px">268</div><div class="dc" style="left:648px;width:81px">270</div><div class="dc" style="left:729px;width:81px">292</div><div class="dc" style="left:810px;width:81px">276</div><div class="dc" style="left:891px;width:82px">265</div><div class="dc ru" style="left:973px;width:94px">3,400</div></div>
<div class="rh" style="top:812px;width:769px;height:25px"><svg class="pm" style="left:8px;top:6px" width="11" height="11" viewBox="0 0 11 11"><rect x="0.5" y="0.5" width="10" height="10" fill="#eef5fe" stroke="#5b7896"/><rect x="3" y="5" width="5" height="1" fill="#111"/><rect x="5" y="3" width="1" height="5" fill="#111"/></svg><span class="abs" style="left:26px">Wells, William L</span></div>
<div class="dr " style="top:812px;height:25px"><div class="dc" style="left:0px;width:82px">215</div><div class="dc" style="left:82px;width:80px">219</div><div class="dc" style="left:162px;width:81px">223</div><div class="dc" style="left:243px;width:81px">275</div><div class="dc" style="left:324px;width:81px">364</div><div class="dc" style="left:405px;width:81px">194</div><div class="dc" style="left:486px;width:81px">209</div><div class="dc" style="left:567px;width:81px">206</div><div class="dc" style="left:648px;width:81px">178</div><div class="dc" style="left:729px;width:81px">250</div><div class="dc" style="left:810px;width:81px">215</div><div class="dc" style="left:891px;width:82px">131</div><div class="dc ru" style="left:973px;width:94px">2,679</div></div>
<div class="rh" style="top:837px;width:769px;height:25px"><svg class="pm" style="left:8px;top:6px" width="11" height="11" viewBox="0 0 11 11"><rect x="0.5" y="0.5" width="10" height="10" fill="#eef5fe" stroke="#5b7896"/><rect x="3" y="5" width="5" height="1" fill="#111"/><rect x="5" y="3" width="1" height="5" fill="#111"/></svg><span class="abs" style="left:26px">Ashton, Spencer A</span></div>
<div class="dr " style="top:837px;height:25px"><div class="dc" style="left:0px;width:82px">252</div><div class="dc" style="left:82px;width:80px">226</div><div class="dc" style="left:162px;width:81px">236</div><div class="dc" style="left:243px;width:81px">264</div><div class="dc" style="left:324px;width:81px">265</div><div class="dc" style="left:405px;width:81px">222</div><div class="dc" style="left:486px;width:81px">227</div><div class="dc" style="left:567px;width:81px">146</div><div class="dc" style="left:648px;width:81px">209</div><div class="dc" style="left:729px;width:81px">220</div><div class="dc" style="left:810px;width:81px">139</div><div class="dc" style="left:891px;width:82px">116</div><div class="dc ru" style="left:973px;width:94px">2,522</div></div>
<div class="rh" style="top:862px;width:769px;height:25px"><svg class="pm" style="left:8px;top:6px" width="11" height="11" viewBox="0 0 11 11"><rect x="0.5" y="0.5" width="10" height="10" fill="#eef5fe" stroke="#5b7896"/><rect x="3" y="5" width="5" height="1" fill="#111"/><rect x="5" y="3" width="1" height="5" fill="#111"/></svg><span class="abs" style="left:26px">Warren, Zachary A</span></div>
<div class="dr " style="top:862px;height:25px"><div class="dc" style="left:0px;width:82px">1</div><div class="dc" style="left:82px;width:80px">1</div><div class="dc" style="left:162px;width:81px"></div><div class="dc" style="left:243px;width:81px">120</div><div class="dc" style="left:324px;width:81px">303</div><div class="dc" style="left:405px;width:81px">247</div><div class="dc" style="left:486px;width:81px">244</div><div class="dc" style="left:567px;width:81px">253</div><div class="dc" style="left:648px;width:81px">268</div><div class="dc" style="left:729px;width:81px">316</div><div class="dc" style="left:810px;width:81px">266</div><div class="dc" style="left:891px;width:82px">269</div><div class="dc ru" style="left:973px;width:94px">2,288</div></div>
<div class="rh" style="top:887px;width:769px;height:25px"></div>
<div class="dr " style="top:887px;height:25px"><div class="dc" style="left:0px;width:82px"></div><div class="dc" style="left:82px;width:80px"></div><div class="dc" style="left:162px;width:81px"></div><div class="dc" style="left:243px;width:81px"></div><div class="dc" style="left:324px;width:81px"></div><div class="dc" style="left:405px;width:81px"></div><div class="dc" style="left:486px;width:81px"></div><div class="dc" style="left:567px;width:81px"></div><div class="dc" style="left:648px;width:81px"></div><div class="dc" style="left:729px;width:81px"></div><div class="dc" style="left:810px;width:81px"></div><div class="dc" style="left:891px;width:82px"></div><div class="dc ru" style="left:973px;width:94px"></div></div>
</div>
<div class="abs" style="left:0;top:1079px;width:1903px;height:1px;background:rgba(255,255,255,.6)"></div>
<div id="sb"><div id="sbt"></div><svg class="abs" style="left:0;top:0" width="17" height="1006"><path d="M8.5,6.5 L12.5,11 L4.5,11 Z" fill="#505050"/><path d="M4.5,994 L12.5,994 L8.5,998.5 Z" fill="#505050"/></svg></div>
</body></html>
